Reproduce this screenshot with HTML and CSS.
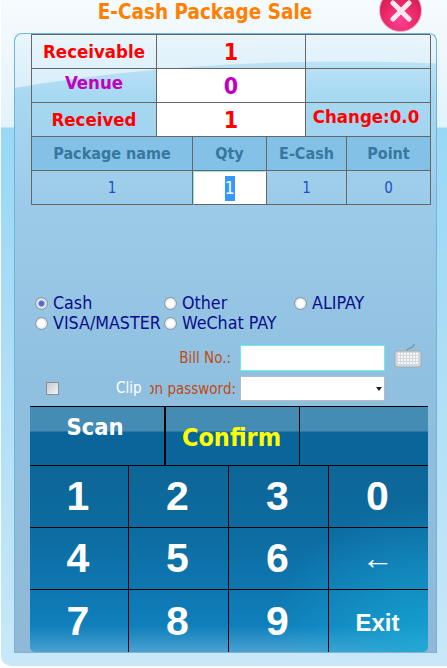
FILE: index.html
```html
<!DOCTYPE html>
<html>

<head>
  <meta charset="utf-8">
  <meta name="viewport" content="width=device-width, initial-scale=1">
  <title>E-Cash Package Sale</title>
  <link rel="stylesheet" href="styles.css">
</head>

<body>
  <div class="window">
    <div class="title">E-Cash Package Sale</div>
    <button class="close-button" aria-label="Close">
      <svg width="26" height="26" viewBox="0 0 26 26">
        <path d="M5 5 L21 21 M21 5 L5 21" stroke="#fdeaf0" stroke-width="5" stroke-linecap="round" />
      </svg>
    </button>

    <div class="panel">
      <div class="summary">
        <div class="cell label red">Receivable</div>
        <div class="cell value red">1</div>
        <div class="cell"></div>
        <div class="cell label purple raised">Venue</div>
        <div class="cell value purple white">0</div>
        <div class="cell"></div>
        <div class="cell label red">Received</div>
        <div class="cell value red white">1</div>
        <div class="cell label change red raised">Change:0.0</div>
      </div>

      <div class="items">
        <div class="cell head">Package name</div>
        <div class="cell head">Qty</div>
        <div class="cell head">E-Cash</div>
        <div class="cell head">Point</div>
        <div class="cell item">1</div>
        <div class="cell item qty"><span class="selected">1</span></div>
        <div class="cell item">1</div>
        <div class="cell item">0</div>
      </div>

      <div class="payments">
        <label class="pay"><span class="radio checked"></span>Cash</label>
        <label class="pay"><span class="radio"></span>Other</label>
        <label class="pay"><span class="radio"></span>ALIPAY</label>
        <label class="pay"><span class="radio"></span>VISA/MASTER</label>
        <label class="pay"><span class="radio"></span>WeChat PAY</label>
      </div>

      <div class="form-row bill-row">
        <div class="form-label">Bill No.:</div>
        <div class="text-input"></div>
        <svg class="keyboard" width="28" height="26" viewBox="0 0 28 26">
          <path d="M13 8 C13 4 20 6 20 1" fill="none" stroke="#7f8a92" stroke-width="1.2" />
          <rect x="1" y="8" width="26" height="16" rx="2" fill="#d3d8dc" stroke="#a3abb2" />
          <path d="M4 11 H24 M4 14 H24 M4 17 H24 M4 20 H24" stroke="#f4f6f7" stroke-width="2" stroke-dasharray="2 1" />
        </svg>
      </div>

      <div class="form-row pass-row">
        <span class="checkbox"></span>
        <span class="clip">Clip</span>
        <div class="form-label clipped"><span>Consumption password:</span></div>
        <div class="select"><span class="arrow"></span></div>
      </div>

      <div class="actions">
        <div class="action scan">Scan</div>
        <div class="action confirm">Confirm</div>
        <div class="action"></div>
      </div>

      <div class="keypad">
        <div class="key">1</div>
        <div class="key">2</div>
        <div class="key">3</div>
        <div class="key">0</div>
        <div class="key">4</div>
        <div class="key">5</div>
        <div class="key">6</div>
        <div class="key arrow-key">←</div>
        <div class="key">7</div>
        <div class="key">8</div>
        <div class="key">9</div>
        <div class="key exit">Exit</div>
      </div>
    </div>
  </div>
</body>

</html>
```

FILE: styles.css
```css
* {
  margin: 0;
  padding: 0;
  box-sizing: border-box;
}

body {
  background: #ffffff;
  font-family: "DejaVu Sans", sans-serif;
  font-stretch: condensed;
  overflow: hidden;
}

.window {
  position: relative;
  width: 446px;
  height: 666px;
  margin-left: 1px;
  padding: 33px 10px 12px 13px;
  border-radius: 0 0 0 10px;
  background: linear-gradient(180deg, #f6fbfe 0, #e2f3fb 127px, #98d8f6 128px, #a8dcf5 300px, #c8e8f8 100%);
}

.title {
  position: absolute;
  top: 0;
  left: 0;
  width: 408px;
  text-align: center;
  color: #ff8000;
  font-size: 20.5px;
  font-weight: bold;
  line-height: 24px;
}

.close-button {
  position: absolute;
  top: -11px;
  left: 378px;
  width: 43px;
  height: 43px;
  border: 1px solid #f2a9c4;
  border-radius: 50%;
  background: radial-gradient(circle at 50% 75%, #ff3f93 0, #e5245f 55%, #b81e45 100%);
  display: flex;
  align-items: center;
  justify-content: center;
}

.panel {
  height: 620px;
  padding-left: 16px;
  border: 1px solid #6fb4da;
  border-bottom-color: #7fb2d2;
  border-radius: 8px 8px 0 0;
  background:
    radial-gradient(ellipse 665px 200px at 330px 227px, rgba(255, 255, 255, 0) 99.5%, rgba(255, 255, 255, 0.55) 100%) 0 0 / 100% 60px no-repeat,
    linear-gradient(180deg, #cfeaf8 0, #a8d9f3 60px, #9bcbe8 170px, #90c0df 350px, #8fb9d6 100%);
}

.summary,
.items {
  display: grid;
  width: 399px;
  border-left: 1px solid #666;
}

.summary {
  grid-template-columns: 125px 149px 125px;
  grid-auto-rows: 34px;
  border-top: 1px solid #666;
}

.items {
  grid-template-columns: 161px 74px 80px 84px;
  grid-auto-rows: 34px;
}

.cell {
  display: flex;
  align-items: center;
  justify-content: center;
  border-right: 1px solid #666;
  border-bottom: 1px solid #666;
  font-weight: bold;
}

.label {
  font-size: 18.5px;
}

.label.change {
  padding-right: 4px;
}

.value {
  font-size: 23px;
}

.raised {
  padding-bottom: 6px;
}

.red {
  color: #ff0000;
}

.purple {
  color: #c000c0;
}

.white {
  background: #ffffff;
}

.head {
  background: #83c2e6;
  color: #38779f;
  font-size: 16px;
}

.item {
  color: #1a4fc8;
  font-size: 15px;
  font-weight: normal;
}

.qty {
  background: #ffffff;
  border: 1px solid #8fe8e8;
  border-right: 1px solid #666;
  border-bottom: 1px solid #666;
}

.selected {
  background: #3399ff;
  color: #ffffff;
  font-size: 17px;
  line-height: 25px;
  padding: 0 1px 0 0;
}

.payments {
  display: grid;
  grid-template-columns: 129px 130px 129px;
  grid-auto-rows: 20px;
  margin-top: 88px;
  margin-left: 4px;
  color: #0b0b8c;
  font-size: 17.7px;
}

.pay {
  display: flex;
  align-items: center;
  gap: 5px;
  white-space: nowrap;
}

.radio {
  width: 13px;
  height: 13px;
  flex: none;
  border: 1px solid #8d97a3;
  border-radius: 50%;
  background: radial-gradient(circle, #ffffff 0, #ffffff 40%, #b9c0c8 100%);
}

.radio.checked {
  background: radial-gradient(circle, #3f62c8 0, #5c7dd8 35%, #e8ecf2 45%, #b9c0c8 100%);
}

.form-row {
  display: flex;
  align-items: center;
}

.bill-row {
  height: 26px;
  margin-top: 12px;
  padding-left: 119px;
}

.form-label {
  width: 86px;
  margin-right: 4px;
  color: #c04a14;
  font-size: 15px;
  text-align: right;
  white-space: nowrap;
}

.bill-row .form-label {
  margin-right: 9px;
  width: 81px;
}

.text-input {
  width: 145px;
  height: 26px;
  background: #ffffff;
  border: 1px solid #66f0f0;
}

.keyboard {
  margin-left: 9px;
  margin-top: -4px;
}

.pass-row {
  height: 25px;
  margin-top: 5px;
  padding-left: 15px;
}

.checkbox {
  width: 13px;
  height: 13px;
  border: 1px solid #8a8f94;
  background: linear-gradient(135deg, #c4c9ce, #f2f4f5);
}

.clip {
  margin-left: 57px;
  width: 34px;
  color: #ffffff;
  font-size: 15px;
  padding-bottom: 2px;
}

.clipped {
  display: flex;
  justify-content: flex-end;
  overflow: hidden;
}

.select {
  position: relative;
  width: 145px;
  height: 25px;
  background: #ffffff;
  border: 1px solid #b4bcc4;
}

.arrow {
  position: absolute;
  right: 2px;
  top: 10px;
  border-left: 3px solid transparent;
  border-right: 3px solid transparent;
  border-top: 4px solid #222;
}

.actions {
  display: grid;
  grid-template-columns: 136px 134px 128px;
  height: 60px;
  width: 398px;
  margin-top: 5px;
  margin-left: -1px;
  border-top: 1px solid #000;
  border-bottom: 1px solid #000;
  background: linear-gradient(180deg, #458cb5 0, #458cb5 24px, #0a659b 25px, #0a659b 100%);
}

.action {
  display: flex;
  justify-content: center;
  font-weight: bold;
  color: #ffffff;
}

.action.scan {
  border-right: 2px solid #000;
  padding-top: 6px;
  padding-right: 4px;
  font-size: 23.5px;
}

.action.confirm {
  border-right: 1px solid #000;
  padding-top: 16px;
  padding-right: 2px;
  color: #ffff00;
  font-size: 25px;
}

.keypad {
  display: grid;
  grid-template-columns: 99px 100px 100px 99px;
  grid-template-rows: 62px 62px 62px;
  width: 398px;
  height: 186px;
  margin-left: -1px;
  border-radius: 0 0 5px 5px;
  background:
    radial-gradient(ellipse 160px 150px at 100% 100%, rgba(24, 170, 215, 0.8), rgba(24, 170, 215, 0)),
    linear-gradient(180deg, #0d6697 0, #0d6b9f 60px, #0e74ad 110px, #0f7fbb 160px, #4aa1d0 100%);
}

.key {
  display: flex;
  align-items: center;
  justify-content: center;
  padding-right: 2px;
  border-right: 1px solid #000;
  border-bottom: 1px solid #000;
  color: #ffffff;
  font-family: "Liberation Sans", Arial, sans-serif;
  font-stretch: normal;
  font-size: 41px;
  font-weight: bold;
}

.key:nth-child(4n) {
  border-right: none;
}

.key:nth-child(n+9) {
  border-bottom: none;
}

.arrow-key {
  font-size: 32px;
  font-weight: normal;
}

.exit {
  font-size: 24px;
  padding-top: 4px;
}
```
